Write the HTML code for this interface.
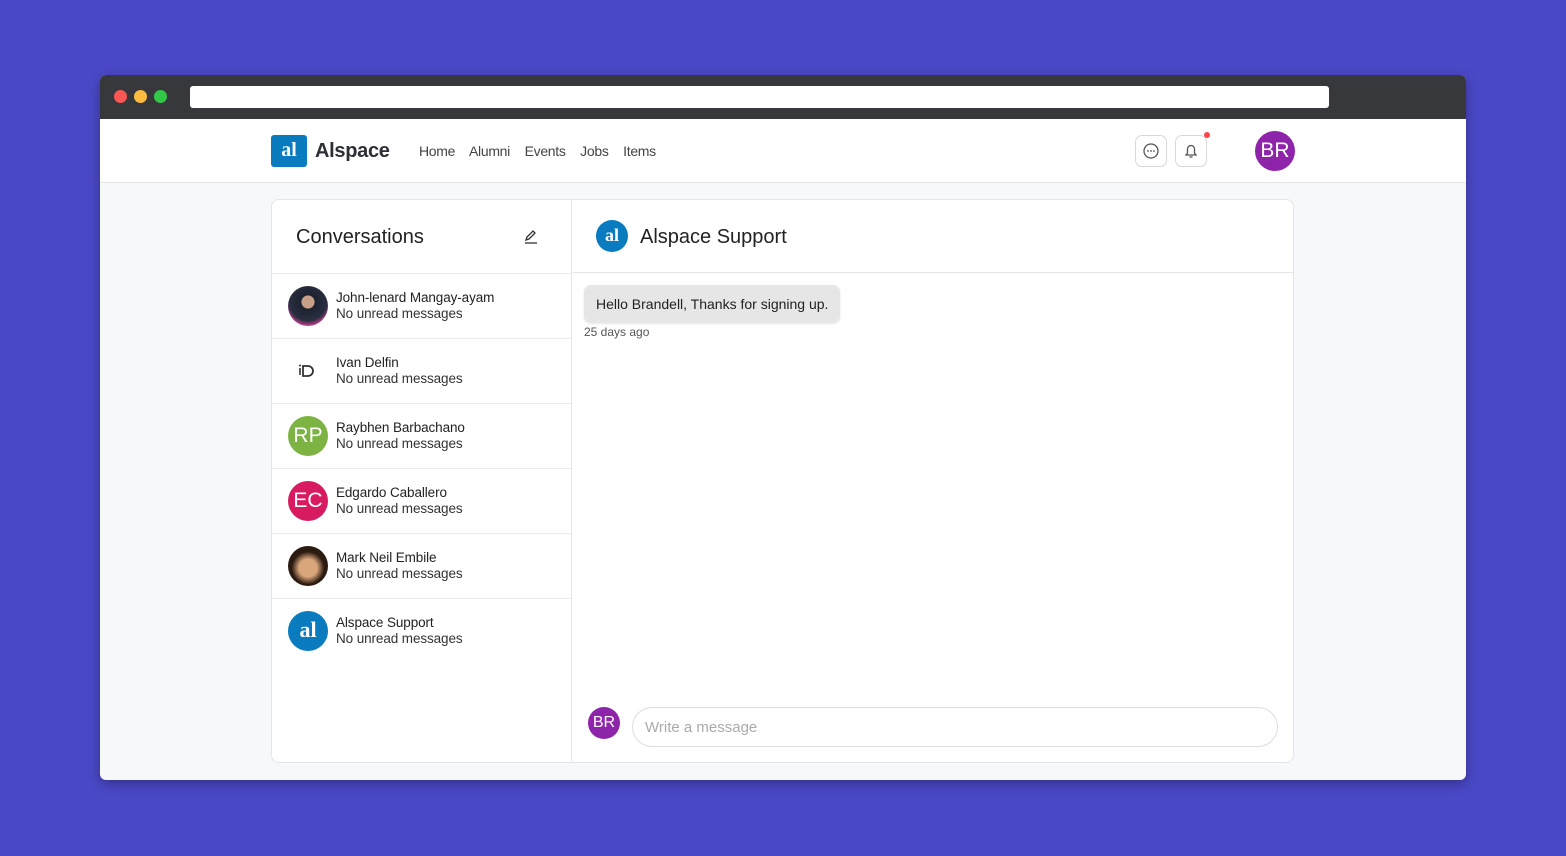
<!DOCTYPE html>
<html><head><style>
*{box-sizing:border-box;margin:0;padding:0}
body{width:1566px;height:856px;background:#4a48c6;font-family:"Liberation Sans",sans-serif;position:relative;overflow:hidden}
.win{position:absolute;left:100px;top:75px;width:1366px;height:705px;border-radius:6px;overflow:hidden;background:#f7f8fa;box-shadow:0 4px 12px rgba(0,0,0,.3)}
.bar{height:44px;background:#37383c;position:relative}
.dot{position:absolute;top:15px;width:13px;height:13px;border-radius:50%}
.url{position:absolute;left:90px;top:11px;width:1139px;height:22px;background:#fff;border-radius:3px}
.hdr{height:64px;background:#fff;border-bottom:1px solid #e3e5ea;position:relative}
.logo{position:absolute;left:171px;top:16px;width:36px;height:32px;background:#0a7bbf;border-radius:3px;color:#fff;font:bold 20px "Liberation Serif",serif;text-align:center;line-height:30px}
.brand{position:absolute;left:215px;top:21px;font-size:20px;font-weight:bold;color:#2d2f36;letter-spacing:-0.3px}
.nav{position:absolute;left:319px;top:24px;font-size:14px;color:#444;letter-spacing:-0.3px}
.nav span{margin-right:11px}
.ib{position:absolute;top:16px;width:32px;height:32px;border:1px solid #d8d8d8;border-radius:7px}
.av{border-radius:50%;color:#fff;text-align:center;position:absolute}
.card{position:absolute;left:171px;top:124px;width:1023px;height:564px;background:#fff;border:1px solid #e3e5ea;border-radius:8px}
.side{position:absolute;left:0;top:0;width:300px;height:100%;border-right:1px solid #e3e5ea}
.item{height:65px;border-top:1px solid #ebebeb;position:relative}
.item .av{left:16px;top:12px;width:40px;height:40px;font-size:21px;line-height:40px}
.nm{position:absolute;left:64px;top:16px;font-size:13.5px;color:#222;letter-spacing:-0.1px}
.sb{position:absolute;left:64px;top:32px;font-size:13.5px;color:#333;letter-spacing:-0.1px}
</style></head><body>
<div class="win">
<div class="bar"><div class="dot" style="left:14px;background:#fc5753"></div><div class="dot" style="left:34px;background:#fdbc40"></div><div class="dot" style="left:54px;background:#33c748"></div><div class="url"></div></div>
<div class="hdr">
<div class="logo">al</div><div class="brand">Alspace</div>
<div class="nav"><span>Home</span> <span>Alumni</span> <span>Events</span> <span>Jobs</span> <span>Items</span></div>
<div class="ib" style="left:1035px"><svg width="30" height="30" viewBox="0 0 30 30"><circle cx="15" cy="15" r="7" fill="none" stroke="#555" stroke-width="1.3"/><circle cx="12" cy="15" r=".9" fill="#555"/><circle cx="15" cy="15" r=".9" fill="#555"/><circle cx="18" cy="15" r=".9" fill="#555"/></svg></div>
<div class="ib" style="left:1075px"><svg width="30" height="30" viewBox="0 0 30 30"><path d="M10 19h10l-1.5-2v-4a3.5 3.5 0 0 0-7 0v4z" fill="none" stroke="#555" stroke-width="1.3"/><path d="M13.5 21h3" stroke="#555" stroke-width="1.3"/></svg></div>
<div style="position:absolute;left:1104px;top:13px;width:6px;height:6px;border-radius:50%;background:#f44"></div>
<div class="av" style="left:1155px;top:12px;width:40px;height:40px;background:#8e24aa;font-size:21px;line-height:40px">BR</div>
</div>
<div class="card">
<div class="side">
<div style="height:73px;position:relative"><div style="position:absolute;left:24px;top:26px;font-size:20px;color:#222">Conversations</div>
<svg style="position:absolute;left:250px;top:27px" width="18" height="18" viewBox="0 0 18 18"><path d="M4 13l1-3 6-6 2 2-6 6z" fill="none" stroke="#333" stroke-width="1.3"/><path d="M3 16h12" stroke="#333" stroke-width="1.3"/></svg></div>
<div class="item"><div class="av" style="background:radial-gradient(circle at 50% 40%,#c8a08a 20%,#1d2230 22%,#2a2f40 60%,#c03a8a 75%,#3b5fcf)"></div><div class="nm">John-lenard Mangay-ayam</div><div class="sb">No unread messages</div></div>
<div class="item"><div class="av"><svg width="40" height="40" viewBox="0 0 40 40"><path d="M12 17v7" stroke="#333" stroke-width="1.6"/><circle cx="12" cy="14.5" r="1" fill="#333"/><path d="M15 15h5a5 5 0 0 1 0 10h-5z" fill="none" stroke="#333" stroke-width="1.8"/></svg></div><div class="nm">Ivan Delfin</div><div class="sb">No unread messages</div></div>
<div class="item"><div class="av" style="background:#7cb342">RP</div><div class="nm">Raybhen Barbachano</div><div class="sb">No unread messages</div></div>
<div class="item"><div class="av" style="background:#d81b60">EC</div><div class="nm">Edgardo Caballero</div><div class="sb">No unread messages</div></div>
<div class="item"><div class="av" style="background:radial-gradient(circle at 50% 55%,#d9a57a 30%,#2a1a10 55%)"></div><div class="nm">Mark Neil Embile</div><div class="sb">No unread messages</div></div>
<div class="item"><div class="av" style="background:#0a7bbf;font:bold 22px 'Liberation Serif',serif;line-height:38px">al</div><div class="nm">Alspace Support</div><div class="sb">No unread messages</div></div>
</div>
<div style="position:absolute;left:300px;top:0;right:0;height:73px;border-bottom:1px solid #e3e5ea">
<div class="av" style="left:24px;top:20px;width:32px;height:32px;background:#0a7bbf;font:bold 18px 'Liberation Serif',serif;line-height:30px">al</div>
<div style="position:absolute;left:68px;top:26px;font-size:20px;color:#222">Alspace Support</div></div>
<div style="position:absolute;left:312px;top:85px;background:#e6e6e6;border-radius:7px;padding:11px 12px;font-size:14px;color:#222;box-shadow:0 1px 2px rgba(0,0,0,.1)">Hello Brandell, Thanks for signing up.</div>
<div style="position:absolute;left:312px;top:125px;font-size:12px;color:#555">25 days ago</div>
<div class="av" style="left:316px;top:507px;width:32px;height:32px;background:#8e24aa;font-size:16px;line-height:32px">BR</div>
<div style="position:absolute;left:360px;top:507px;width:646px;height:40px;border:1px solid #ddd;border-radius:20px;padding:11px 12px;font-size:15px;color:#aaa">Write a message</div>
</div>
</div>
</body></html>
